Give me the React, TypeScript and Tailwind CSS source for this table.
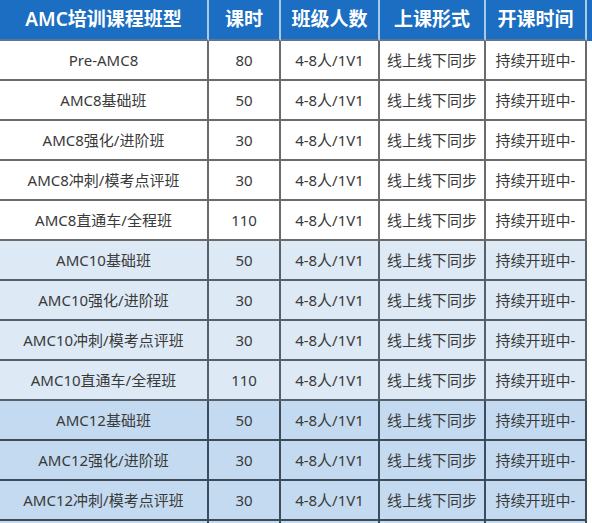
import React from "react";

const cols = ["w-[209px]", "w-[72px]", "w-[99px]", "w-[106px]", "w-[101px]"];

const headers = ["AMC培训课程班型", "课时", "班级人数", "上课形式", "开课时间"];

const rows: { name: string; hours: number; tone: "white" | "light" | "mid" }[] = [
  { name: "Pre-AMC8", hours: 80, tone: "white" },
  { name: "AMC8基础班", hours: 50, tone: "white" },
  { name: "AMC8强化/进阶班", hours: 30, tone: "white" },
  { name: "AMC8冲刺/模考点评班", hours: 30, tone: "white" },
  { name: "AMC8直通车/全程班", hours: 110, tone: "white" },
  { name: "AMC10基础班", hours: 50, tone: "light" },
  { name: "AMC10强化/进阶班", hours: 30, tone: "light" },
  { name: "AMC10冲刺/模考点评班", hours: 30, tone: "light" },
  { name: "AMC10直通车/全程班", hours: 110, tone: "light" },
  { name: "AMC12基础班", hours: 50, tone: "mid" },
  { name: "AMC12强化/进阶班", hours: 30, tone: "mid" },
  { name: "AMC12冲刺/模考点评班", hours: 30, tone: "mid" },
];

const toneBg = {
  white: "bg-white border-[#6b6b6b]",
  light: "bg-[#dde9f5] border-[#55606b]",
  mid: "bg-[#c4daf0] border-[#3e4c5a]",
};

export default function App() {
  return (
    <div
      className="w-[592px] h-[523px] overflow-hidden bg-white"
      style={{ fontFamily: '"Noto Sans", "Noto Sans CJK SC", sans-serif' }}
    >
      <div className="flex h-[41px] bg-[#1b6ec1] text-white text-[19px] font-semibold">
        {headers.map((h, i) => (
          <div
            key={h}
            className={`${cols[i]} flex items-center justify-center border-r-2 border-b-2 border-r-[#a9cbea] border-b-[#5d7790]`}
          >
            {h}
          </div>
        ))}
      </div>
      {rows.map((r) => (
        <div key={r.name} className="flex h-[40px] text-[15px] text-[#3a3a3a]">
          {[r.name, String(r.hours), "4-8人/1V1", "线上线下同步", "持续开班中-"].map(
            (t, i) => (
              <div
                key={i}
                className={`${cols[i]} ${toneBg[r.tone]} flex items-center justify-center border-r-2 border-b-2 whitespace-nowrap`}
              >
                {t}
              </div>
            )
          )}
        </div>
      ))}
      {/* next row, only its top edge shows */}
      <div className="flex h-[40px]">
        {cols.map((c, i) => (
          <div key={i} className={`${c} ${toneBg.mid} border-r-2`} />
        ))}
      </div>
    </div>
  );
}
